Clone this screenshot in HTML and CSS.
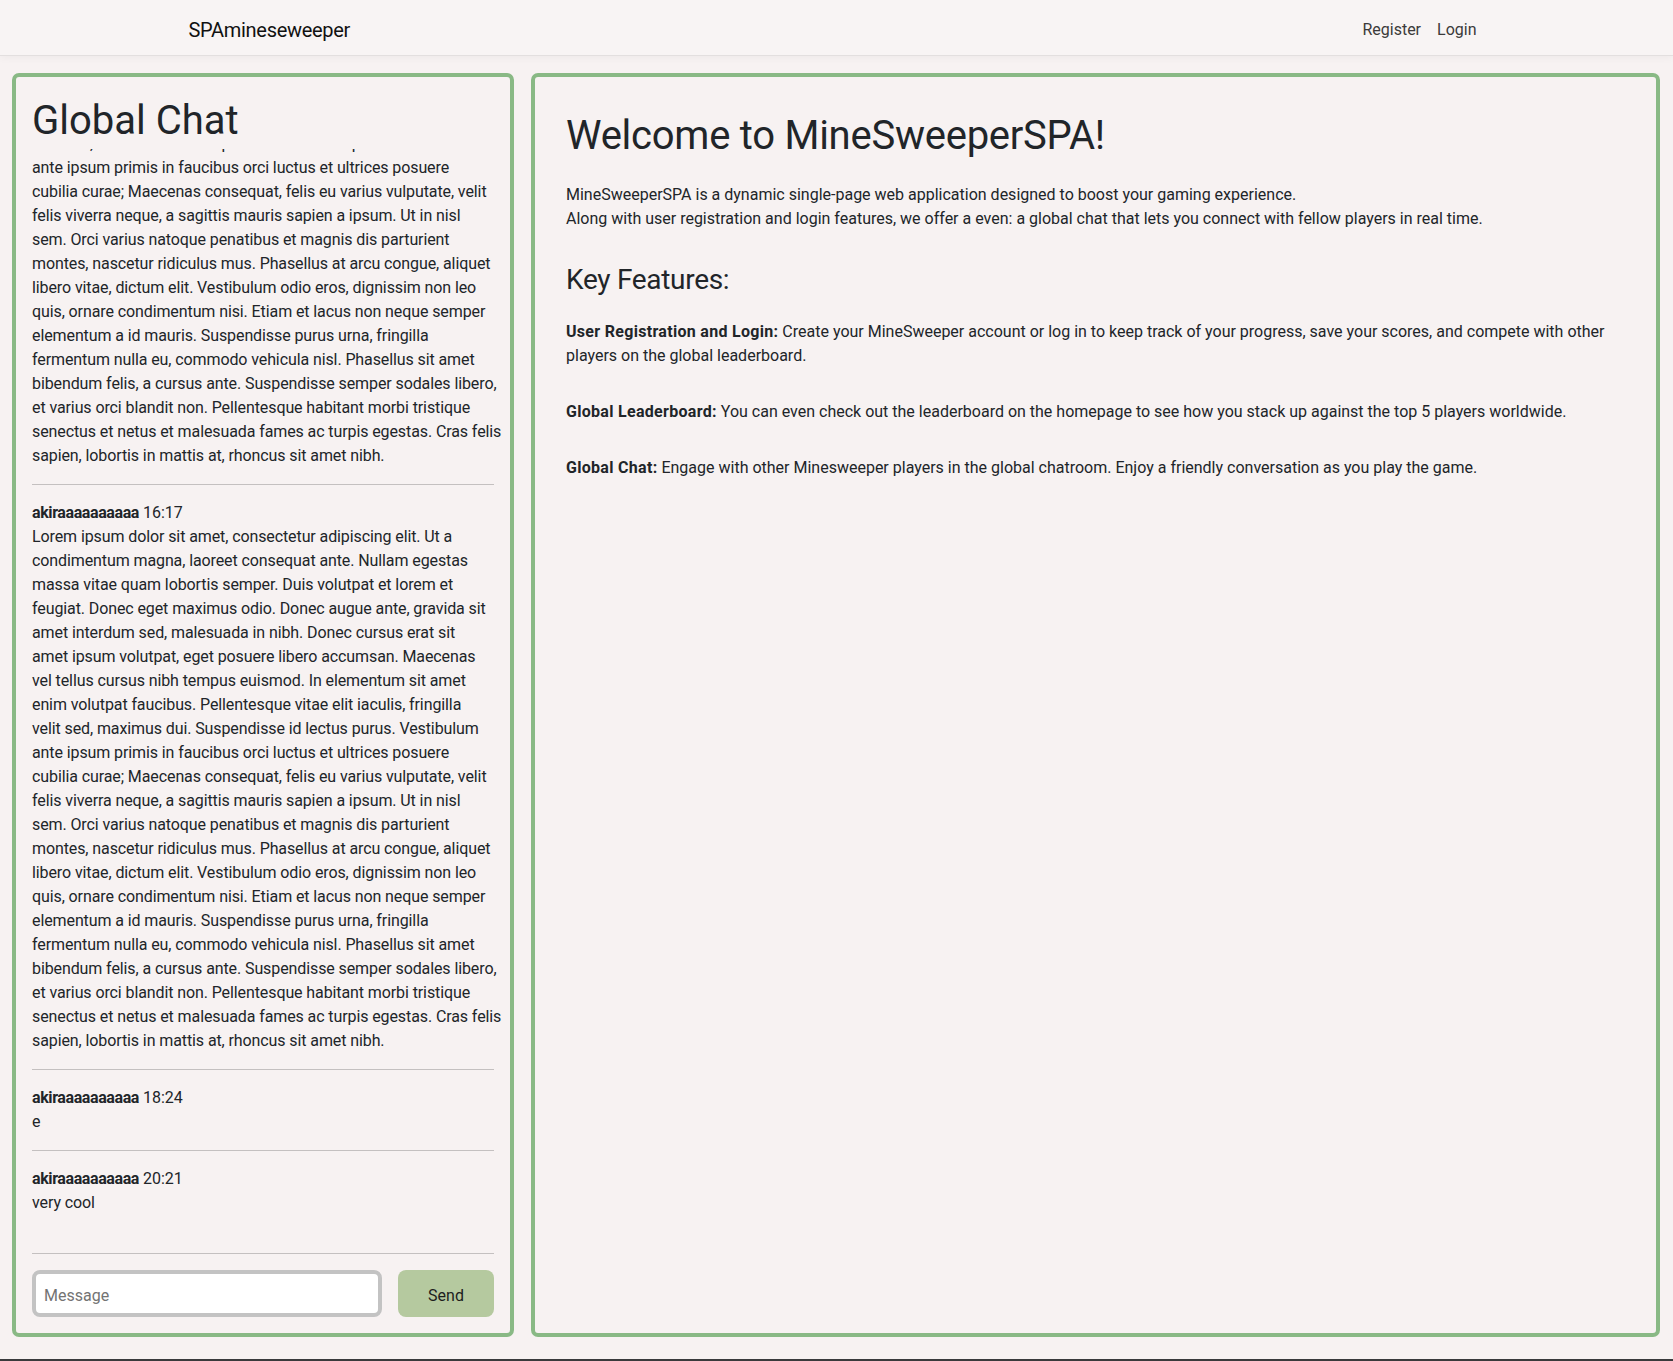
FILE: index.html
```html
<!DOCTYPE html>
<html lang="en">
<head>
<meta charset="utf-8">
<title>SPAmineseweeper</title>
<link rel="stylesheet" href="styles.css">
</head>
<body>
<nav class="navbar">
  <div class="nav-inner">
    <a class="brand" href="#">SPAmineseweeper</a>
    <div class="nav-links">
      <a class="nav-link" href="#">Register</a>
      <a class="nav-link" href="#">Login</a>
    </div>
  </div>
</nav>
<main class="layout">
  <section class="chat-panel">
    <h1 class="chat-title">Global Chat</h1>
    <div class="messages">
      <div class="message">
        <div class="msg-head"><b class="msg-user">akiraaaaaaaaaa</b> 15:02</div>
        <div class="msg-text">Lorem ipsum dolor sit amet, consectetur adipiscing elit. Ut a<br>condimentum magna, laoreet consequat ante. Nullam egestas<br>massa vitae quam lobortis semper. Duis volutpat et lorem et<br>feugiat. Donec eget maximus odio. Donec augue ante, gravida sit<br>amet interdum sed, malesuada in nibh. Donec cursus erat sit<br>amet ipsum volutpat, eget posuere libero accumsan. Maecenas<br>vel tellus cursus nibh tempus euismod. In elementum sit amet<br>enim volutpat faucibus. Pellentesque vitae elit iaculis, fringilla<br>velit sed, maximus dui. Suspendisse id lectus purus. Vestibulum<br>ante ipsum primis in faucibus orci luctus et ultrices posuere<br>cubilia curae; Maecenas consequat, felis eu varius vulputate, velit<br>felis viverra neque, a sagittis mauris sapien a ipsum. Ut in nisl<br>sem. Orci varius natoque penatibus et magnis dis parturient<br>montes, nascetur ridiculus mus. Phasellus at arcu congue, aliquet<br>libero vitae, dictum elit. Vestibulum odio eros, dignissim non leo<br>quis, ornare condimentum nisi. Etiam et lacus non neque semper<br>elementum a id mauris. Suspendisse purus urna, fringilla<br>fermentum nulla eu, commodo vehicula nisl. Phasellus sit amet<br>bibendum felis, a cursus ante. Suspendisse semper sodales libero,<br>et varius orci blandit non. Pellentesque habitant morbi tristique<br>senectus et netus et malesuada fames ac turpis egestas. Cras felis<br>sapien, lobortis in mattis at, rhoncus sit amet nibh.</div>
      </div>
      <hr class="msg-sep">
      <div class="message">
        <div class="msg-head"><b class="msg-user">akiraaaaaaaaaa</b> 16:17</div>
        <div class="msg-text">Lorem ipsum dolor sit amet, consectetur adipiscing elit. Ut a<br>condimentum magna, laoreet consequat ante. Nullam egestas<br>massa vitae quam lobortis semper. Duis volutpat et lorem et<br>feugiat. Donec eget maximus odio. Donec augue ante, gravida sit<br>amet interdum sed, malesuada in nibh. Donec cursus erat sit<br>amet ipsum volutpat, eget posuere libero accumsan. Maecenas<br>vel tellus cursus nibh tempus euismod. In elementum sit amet<br>enim volutpat faucibus. Pellentesque vitae elit iaculis, fringilla<br>velit sed, maximus dui. Suspendisse id lectus purus. Vestibulum<br>ante ipsum primis in faucibus orci luctus et ultrices posuere<br>cubilia curae; Maecenas consequat, felis eu varius vulputate, velit<br>felis viverra neque, a sagittis mauris sapien a ipsum. Ut in nisl<br>sem. Orci varius natoque penatibus et magnis dis parturient<br>montes, nascetur ridiculus mus. Phasellus at arcu congue, aliquet<br>libero vitae, dictum elit. Vestibulum odio eros, dignissim non leo<br>quis, ornare condimentum nisi. Etiam et lacus non neque semper<br>elementum a id mauris. Suspendisse purus urna, fringilla<br>fermentum nulla eu, commodo vehicula nisl. Phasellus sit amet<br>bibendum felis, a cursus ante. Suspendisse semper sodales libero,<br>et varius orci blandit non. Pellentesque habitant morbi tristique<br>senectus et netus et malesuada fames ac turpis egestas. Cras felis<br>sapien, lobortis in mattis at, rhoncus sit amet nibh.</div>
      </div>
      <hr class="msg-sep">
      <div class="message">
        <div class="msg-head"><b class="msg-user">akiraaaaaaaaaa</b> 18:24</div>
        <div class="msg-text">e</div>
      </div>
      <hr class="msg-sep">
      <div class="message">
        <div class="msg-head"><b class="msg-user">akiraaaaaaaaaa</b> 20:21</div>
        <div class="msg-text">very cool</div>
      </div>
    </div>
    <form class="chat-form">
      <input class="msg-input" type="text" placeholder="Message">
      <button class="send-btn" type="button">Send</button>
    </form>
  </section>
  <section class="info-panel">
    <h1 class="welcome">Welcome to MineSweeperSPA!</h1>
    <p class="intro">MineSweeperSPA is a dynamic single-page web application designed to boost your gaming experience.<br>Along with user registration and login features, we offer a even: a global chat that lets you connect with fellow players in real time.</p>
    <h3 class="features-title">Key Features:</h3>
    <p class="feature"><b class="feature-name">User Registration and Login:</b> Create your MineSweeper account or log in to keep track of your progress, save your scores, and compete with other players on the global leaderboard.</p>
    <p class="feature"><b class="feature-name">Global Leaderboard:</b> You can even check out the leaderboard on the homepage to see how you stack up against the top 5 players worldwide.</p>
    <p class="feature"><b class="feature-name">Global Chat:</b> Engage with other Minesweeper players in the global chatroom. Enjoy a friendly conversation as you play the game.</p>
  </section>
</main>
</body>
</html>
```
FILE: styles.css
```css
* { box-sizing: border-box; }

html, body { margin: 0; }

body {
  background: #f7f2f2;
  color: #212529;
  font-family: Roboto, "Liberation Sans", sans-serif;
  font-size: 16px;
  line-height: 1.5;
  height: 1361px;
  overflow: hidden;
}

body::after {
  content: "";
  position: fixed;
  left: 0;
  right: 0;
  bottom: 0;
  height: 2px;
  background: #3a3a3c;
}

.navbar {
  height: 56px;
  background: #f8f4f4;
  border-bottom: 1px solid #e3dfdf;
  box-shadow: 0 2px 8px rgba(0, 0, 0, 0.04);
  position: relative;
}

.nav-inner {
  max-width: 1320px;
  height: 100%;
  margin: 0 auto;
  padding: 4px 12px 0;
  display: flex;
  align-items: center;
  justify-content: space-between;
}

.brand {
  font-size: 20px;
  letter-spacing: -0.3px;
  color: #111;
  text-decoration: none;
}

.nav-links { display: flex; }

.nav-link {
  padding: 8px;
  color: #3b3a3a;
  text-decoration: none;
}

.layout {
  display: flex;
  gap: 17px;
  padding: 17px 13px 0 12px;
}

.chat-panel {
  width: 502px;
  height: 1264px;
  border: 4px solid #89b985;
  border-radius: 7px;
  padding: 16px;
  display: flex;
  flex-direction: column;
}

.chat-title {
  font-size: 40px;
  font-weight: 400;
  line-height: 1.2;
  margin: 0 0 4px;
  padding-top: 4px;
}

.messages {
  flex: 1;
  min-height: 0;
  overflow-x: visible;
  overflow-y: clip;
  display: flex;
  flex-direction: column;
  justify-content: flex-end;
}

.message { flex-shrink: 0; }

.msg-user { letter-spacing: -0.4px; }

.msg-text {
  white-space: nowrap;
  letter-spacing: -0.1px;
}

.msg-sep {
  flex-shrink: 0;
  width: 100%;
  margin: 16px 0;
  border: 0;
  border-top: 1px solid #c4c0c0;
}

.chat-form {
  margin: 38px 0 0;
  padding-top: 16px;
  border-top: 1px solid #c4c0c0;
  display: flex;
  gap: 16px;
}

.msg-input {
  flex: 1;
  height: 47px;
  border: 4px solid #c3c3c3;
  border-radius: 8px;
  background: #fff;
  padding: 4px 8px 0;
  font: inherit;
  color: #212529;
}

.msg-input::placeholder { color: #737373; }

.send-btn {
  width: 96px;
  height: 47px;
  border: 0;
  border-radius: 8px;
  background: #b5c99f;
  padding: 4px 0 0;
  font: inherit;
  color: #1d1d1d;
}

.info-panel {
  flex: 1;
  height: 1264px;
  border: 4px solid #89b985;
  border-radius: 7px;
  padding: 35px 31px;
}

.welcome {
  font-size: 40px;
  font-weight: 400;
  line-height: 1.2;
  letter-spacing: -0.25px;
  margin: 0 0 23px;
}

.intro { margin: 0 0 32px; }

.features-title {
  font-size: 28px;
  font-weight: 400;
  line-height: 1.2;
  letter-spacing: -0.3px;
  margin: 0 0 23px;
}

.feature { margin: 0 0 32px; }

.feature-name { letter-spacing: 0.3px; }
```
